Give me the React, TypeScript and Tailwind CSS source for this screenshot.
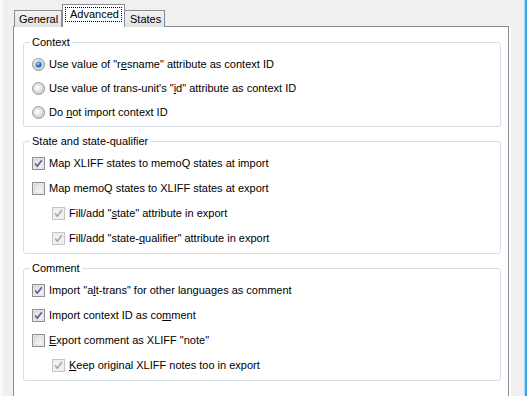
import type { ReactNode } from "react";

const font = { fontFamily: '"Liberation Sans", Arial, sans-serif' };

function CheckBox({ checked, disabled }: { checked?: boolean; disabled?: boolean }) {
  const border = disabled ? "#c5c5c5" : "#8f8f8f";
  const mark = disabled ? "#a6a6a6" : "#4c5f8e";
  return (
    <svg width="13" height="13" viewBox="0 0 13 13" className="shrink-0">
      <defs>
        <linearGradient id="cbg" x1="0" y1="0" x2="1" y2="1">
          <stop offset="0" stopColor="#dcdcdc" />
          <stop offset="1" stopColor="#fbfbfb" />
        </linearGradient>
      </defs>
      <rect x="0.5" y="0.5" width="12" height="12" fill="#f4f4f4" stroke={border} />
      <rect x="2" y="2" width="9" height="9" fill={disabled ? "#f2f2f2" : "url(#cbg)"} stroke={disabled ? "#e0e0e0" : "#c9c9c9"} strokeWidth="0.6" />
      {checked && (
        <path d="M3.2 6.6 L5.3 9.2 L9.8 3.2" fill="none" stroke={mark} strokeWidth="1.6" strokeLinejoin="round" />
      )}
    </svg>
  );
}

function Radio({ checked }: { checked?: boolean }) {
  return (
    <svg width="13" height="13" viewBox="0 0 13 13" className="shrink-0">
      <defs>
        <radialGradient id="rbg" cx="0.35" cy="0.35" r="0.7">
          <stop offset="0" stopColor="#ffffff" />
          <stop offset="1" stopColor="#d4d4d4" />
        </radialGradient>
        <radialGradient id="rdot" cx="0.4" cy="0.35" r="0.65">
          <stop offset="0" stopColor="#9fd3ff" />
          <stop offset="0.6" stopColor="#2c7fd6" />
          <stop offset="1" stopColor="#1b4f96" />
        </radialGradient>
      </defs>
      <circle cx="6.5" cy="6.5" r="6" fill="url(#rbg)" stroke="#929292" />
      <circle cx="6.5" cy="6.5" r="4.3" fill="none" stroke="#c8c8c8" strokeWidth="0.8" />
      {checked && <circle cx="6.5" cy="6.5" r="3" fill="url(#rdot)" />}
    </svg>
  );
}

function Row({
  control,
  indent,
  h,
  children,
}: {
  control: ReactNode;
  indent?: boolean;
  h: "r" | "c";
  children: ReactNode;
}) {
  return (
    <div
      className={`flex items-center gap-[4px] ${h === "r" ? "h-[24px]" : "h-[25px]"} ${
        indent ? "pl-[28px]" : "pl-[8px]"
      }`}
    >
      {control}
      <span className="text-[11px] leading-[13px] text-black whitespace-nowrap">{children}</span>
    </div>
  );
}

function Group({ title, children, className = "" }: { title: string; children: ReactNode; className?: string }) {
  return (
    <fieldset className={`border border-[#d5dfe5] rounded-[3px] pt-[3px] pb-[2px] ${className}`}>
      <legend className="ml-[6px] px-[2px] text-[11px] leading-[13px] text-black">{title}</legend>
      {children}
    </fieldset>
  );
}

export default function App() {
  return (
    <div className="w-[527px] h-[396px] bg-[#f0f0f0] overflow-hidden flex" style={font}>
      <div className="w-[3px] bg-[#f7f9fc]" />
      <div className="flex-1 pl-[10px] pt-[4px] flex flex-col">
        <div className="flex items-end pl-[1px] h-[23px] -mb-[1px] relative z-10">
          <div className="w-[48px] h-[17px] border border-b-0 border-[#898c95] bg-gradient-to-b from-[#f2f2f2] to-[#e2e2e2] text-[11px] leading-[14px] pt-[1px] pl-[4px]">
            General
          </div>
          <div className="w-[63px] h-[23px] border border-b-0 border-[#898c95] bg-white text-[11px] px-[2px] pt-[2px]">
            <div className="border border-dotted border-black h-[15px] leading-[13px] px-[4px]">Advanced</div>
          </div>
          <div className="w-[40px] h-[17px] border border-b-0 border-l-0 border-[#898c95] bg-gradient-to-b from-[#f2f2f2] to-[#e2e2e2] text-[11px] leading-[14px] pt-[1px] pl-[5px]">
            States
          </div>
        </div>
        <div className="flex flex-1">
          <div className="w-[496px] border border-b-0 border-[#898c95] bg-white pl-[9px] pr-[7px] pt-[9px] flex flex-col">
            <Group title="Context">
              <Row h="r" control={<Radio checked />}>
                Use value of "r<u>e</u>sname" attribute as context ID
              </Row>
              <Row h="r" control={<Radio />}>
                Use value of trans-unit's "<u>i</u>d" attribute as context ID
              </Row>
              <Row h="r" control={<Radio />}>
                Do <u>n</u>ot import context ID
              </Row>
            </Group>
            <Group title="State and state-qualifier" className="mt-[8px]">
              <Row h="c" control={<CheckBox checked />}>
                Map XLIFF states to memoQ states at import
              </Row>
              <Row h="c" control={<CheckBox />}>
                Map memoQ states to XLIFF states at export
              </Row>
              <Row h="c" indent control={<CheckBox checked disabled />}>
                Fill/add "<u>s</u>tate" attribute in export
              </Row>
              <Row h="c" indent control={<CheckBox checked disabled />}>
                Fill/add "state-<u>q</u>ualifier" attribute in export
              </Row>
            </Group>
            <Group title="Comment" className="mt-[8px]">
              <Row h="c" control={<CheckBox checked />}>
                Import "a<u>l</u>t-trans" for other languages as comment
              </Row>
              <Row h="c" control={<CheckBox checked />}>
                Import context ID as co<u>m</u>ment
              </Row>
              <Row h="c" control={<CheckBox />}>
                <u>E</u>xport comment as XLIFF "note"
              </Row>
              <Row h="c" indent control={<CheckBox checked disabled />}>
                <u>K</u>eep original XLIFF notes too in export
              </Row>
            </Group>
          </div>
          <div className="w-[2px] bg-white mt-[1px]" />
        </div>
      </div>
      <div className="w-[1px] bg-[#a9d6f5]" />
      <div className="w-[2px] bg-[#3ca3ea]" />
    </div>
  );
}
